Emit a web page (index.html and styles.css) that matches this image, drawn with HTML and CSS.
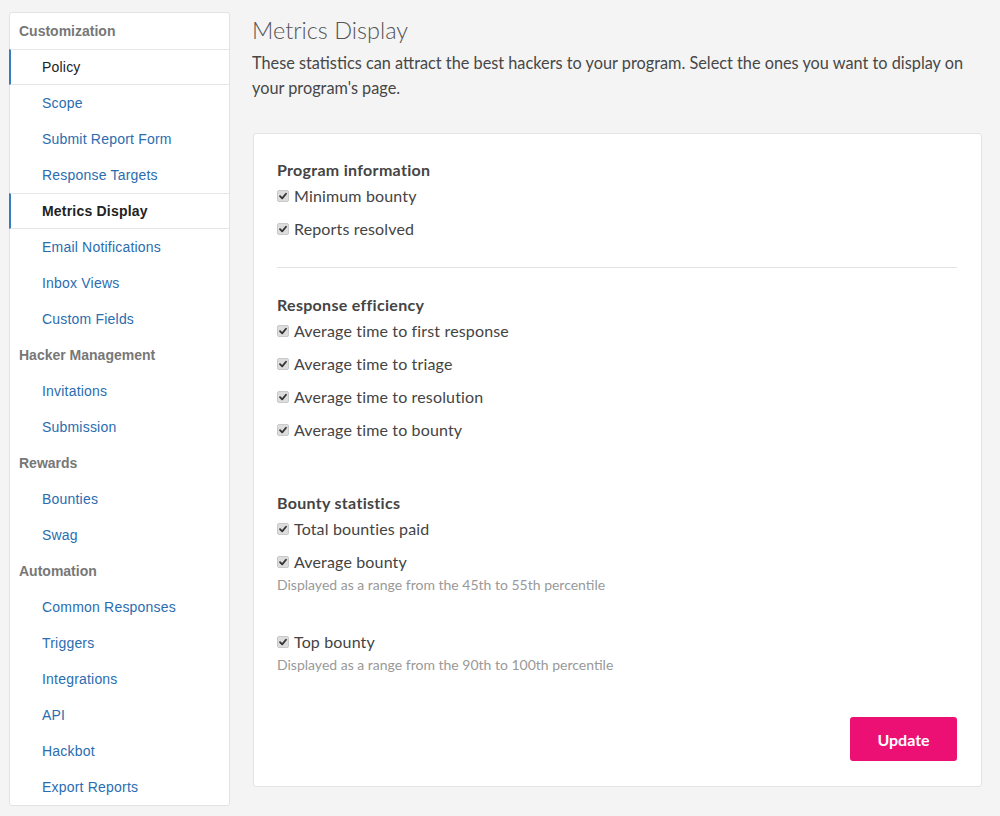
FILE: index.html
```html
<!DOCTYPE html>
<html>
<head>
<meta charset="utf-8">
<link rel="stylesheet" href="styles.css">
</head>
<body>
<div class="page">
  <nav class="sidebar">
    <div class="group">Customization</div>
    <a class="item active first">Policy</a>
    <a class="item">Scope</a>
    <a class="item">Submit Report Form</a>
    <a class="item">Response Targets</a>
    <a class="item active">Metrics Display</a>
    <a class="item">Email Notifications</a>
    <a class="item">Inbox Views</a>
    <a class="item">Custom Fields</a>
    <div class="group">Hacker Management</div>
    <a class="item">Invitations</a>
    <a class="item">Submission</a>
    <div class="group">Rewards</div>
    <a class="item">Bounties</a>
    <a class="item">Swag</a>
    <div class="group">Automation</div>
    <a class="item">Common Responses</a>
    <a class="item">Triggers</a>
    <a class="item">Integrations</a>
    <a class="item">API</a>
    <a class="item">Hackbot</a>
    <a class="item">Export Reports</a>
  </nav>
  <main class="main">
    <h1 class="title">Metrics Display</h1>
    <p class="desc">These statistics can attract the best hackers to your program. Select the ones you want to display on your program's page.</p>
    <section class="card">
      <div class="section">
        <h2 class="sec-title">Program information</h2>
        <label class="check"><span class="box"><svg viewBox="0 0 10 10"><path d="M2 5.2 L4.2 7.4 L8 2.8" /></svg></span>Minimum bounty</label>
        <label class="check"><span class="box"><svg viewBox="0 0 10 10"><path d="M2 5.2 L4.2 7.4 L8 2.8" /></svg></span>Reports resolved</label>
      </div>
      <hr class="divider">
      <div class="section">
        <h2 class="sec-title">Response efficiency</h2>
        <label class="check"><span class="box"><svg viewBox="0 0 10 10"><path d="M2 5.2 L4.2 7.4 L8 2.8" /></svg></span>Average time to first response</label>
        <label class="check"><span class="box"><svg viewBox="0 0 10 10"><path d="M2 5.2 L4.2 7.4 L8 2.8" /></svg></span>Average time to triage</label>
        <label class="check"><span class="box"><svg viewBox="0 0 10 10"><path d="M2 5.2 L4.2 7.4 L8 2.8" /></svg></span>Average time to resolution</label>
        <label class="check"><span class="box"><svg viewBox="0 0 10 10"><path d="M2 5.2 L4.2 7.4 L8 2.8" /></svg></span>Average time to bounty</label>
      </div>
      <div class="section bounty">
        <h2 class="sec-title">Bounty statistics</h2>
        <label class="check"><span class="box"><svg viewBox="0 0 10 10"><path d="M2 5.2 L4.2 7.4 L8 2.8" /></svg></span>Total bounties paid</label>
        <label class="check"><span class="box"><svg viewBox="0 0 10 10"><path d="M2 5.2 L4.2 7.4 L8 2.8" /></svg></span>Average bounty</label>
        <p class="hint">Displayed as a range from the 45th to 55th percentile</p>
        <label class="check top"><span class="box"><svg viewBox="0 0 10 10"><path d="M2 5.2 L4.2 7.4 L8 2.8" /></svg></span>Top bounty</label>
        <p class="hint">Displayed as a range from the 90th to 100th percentile</p>
      </div>
      <div class="actions">
        <button class="btn">Update</button>
      </div>
    </section>
  </main>
</div>
</body>
</html>
```
FILE: styles.css
```css
* { box-sizing: border-box; }
html, body { margin: 0; padding: 0; }
body {
  background: #f4f4f4;
  font-family: "Liberation Sans", Arial, sans-serif;
  color: #444;
}
.page {
  display: flex;
  align-items: flex-start;
  gap: 22px;
  padding: 12px 18px 0 9px;
}
.sidebar {
  width: 221px;
  flex: none;
  background: #fff;
  border: 1px solid #e3e3e3;
  border-radius: 3px;
  display: flex;
  flex-direction: column;
  font-size: 14px;
}
.group {
  height: 36px;
  line-height: 37px;
  padding-left: 9px;
  font-weight: bold;
  color: #777;
}
.item {
  display: block;
  height: 36px;
  line-height: 36px;
  padding-left: 32px;
  color: #2a6db0;
  text-decoration: none;
  letter-spacing: 0.2px;
}
.item.active {
  color: #222;
  border-left: 2px solid #3a7bbf;
  border-top: 1px solid #e6e6e6;
  border-bottom: 1px solid #e6e6e6;
  padding-left: 31px;
  line-height: 35px;
  margin-left: -1px;
}
.item.active:not(.first) { font-weight: bold; }
.main {
  flex: 1;
  font-family: "Lato", "Open Sans", sans-serif;
}
.title {
  margin: 2px 0 0 0;
  font-size: 23.5px;
  font-weight: 300;
  color: #555;
  line-height: 32px;
}
.desc {
  margin: 4px 0 0 0;
  font-size: 16.3px;
  line-height: 25px;
  color: #474747;
}
.card {
  margin: 33px 0 0 1px;
  background: #fff;
  border: 1px solid #e3e3e3;
  border-radius: 3px;
  padding: 25px 24px 25px 23px;
}
.sec-title {
  margin: 0;
  font-size: 16px;
  font-weight: bold;
  letter-spacing: 0.3px;
  color: #444;
  line-height: 22px;
}
.check {
  display: flex;
  align-items: center;
  gap: 5px;
  font-size: 16px;
  letter-spacing: 0.15px;
  color: #444;
  height: 22px;
  margin-bottom: 11px;
}
.sec-title + .check { margin-top: 3px; }
.box {
  width: 12px;
  height: 12px;
  border-radius: 2px;
  background: #ddd;
  border: 1px solid #c9c9c9;
  display: inline-flex;
  align-items: center;
  justify-content: center;
  flex: none;
  margin-top: 2px;
}
.box svg { width: 10px; height: 10px; }
.box path { fill: none; stroke: #333; stroke-width: 1.8; stroke-linecap: round; stroke-linejoin: round; }
.divider {
  border: none;
  border-top: 1px solid #e3e3e3;
  margin: 28px 0 26px 0;
}
.section.bounty { margin-top: 52px; }
.hint {
  margin: -8px 0 0 0;
  font-size: 14px;
  color: #999;
  line-height: 20px;
}
.check.top { margin-top: 35px; }
.actions {
  display: flex;
  justify-content: flex-end;
  margin-top: 42px;
}
.btn {
  width: 107px;
  height: 44px;
  background: #ec1075;
  color: #fff;
  border: none;
  border-radius: 3px;
  font-family: "Lato", sans-serif;
  font-size: 16px;
  font-weight: bold;
}
```
